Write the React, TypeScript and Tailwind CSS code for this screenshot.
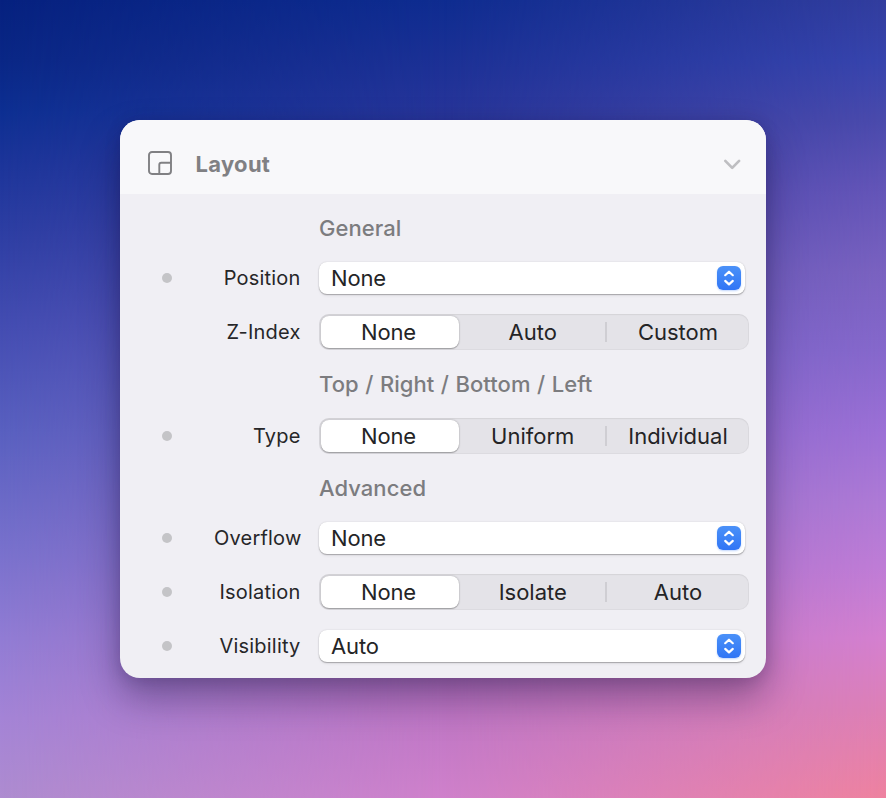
import { ReactNode } from "react";

function Dot({ show }: { show: boolean }) {
  return (
    <div className="flex w-[94px] shrink-0 justify-center">
      {show && <span className="h-2.5 w-2.5 rounded-full bg-[#c4c4c7]" />}
    </div>
  );
}

function Row({ label, dot = true, height, children }: { label: string; dot?: boolean; height: string; children: ReactNode }) {
  return (
    <div className={"flex items-center " + height}>
      <Dot show={dot} />
      <span className="w-[87px] shrink-0 pr-[0.5px] text-right text-[20px] leading-6 tracking-[0.2px] whitespace-nowrap text-[#262628]">{label}</span>
      {children}
    </div>
  );
}

function Heading({ text, height }: { text: string; height: string }) {
  return (
    <h3 className={"flex items-center pl-[199px] text-[22px] font-medium tracking-[0.05px] [word-spacing:0.6px] text-[#7c7c7f] " + height}>{text}</h3>
  );
}

function Select({ value }: { value: string }) {
  return (
    <button className="ml-[18px] flex h-8 w-[426px] items-center justify-between rounded-[8px] bg-white pr-1 pl-3 shadow-[0_1px_1px_rgba(0,0,0,0.24),0_0_1.5px_rgba(0,0,0,0.18),0_2px_3px_rgba(0,0,0,0.06)]">
      <span className="text-[22px] leading-7 tracking-[-0.15px] text-[#242426]">{value}</span>
      <span className="flex h-6 w-6 items-center justify-center rounded-[6px] bg-gradient-to-b from-[#4b91f8] to-[#3075f5] shadow-[0_1px_2px_rgba(48,117,245,0.3)]">
        <svg width="24" height="24" viewBox="0 0 24 24" fill="none" stroke="white" strokeWidth="2.2" strokeLinecap="round" strokeLinejoin="round">
          <path d="M8.2 9.2 12 5.7l3.8 3.5M8.2 14.9 12 18.4l3.8-3.5" />
        </svg>
      </span>
    </button>
  );
}

function Segmented({ items }: { items: [string, string, string] }) {
  return (
    <div className="ml-[18px] flex h-9 w-[430px] items-center rounded-[10px] bg-[#e4e3e8] pl-[2px] shadow-[inset_0_0_0_1px_rgba(0,0,0,0.03),inset_0_1px_2px_rgba(0,0,0,0.04)]">
      <button className="h-8 w-[138px] rounded-[8px] bg-white pr-[3px] text-[22px] leading-8 tracking-[-0.15px] text-[#242426] shadow-[0_1px_1px_rgba(0,0,0,0.24),0_0_2px_rgba(0,0,0,0.3)]">{items[0]}</button>
      <button className="h-8 w-[146px] pl-[1.5px] text-[22px] leading-8 text-[#242426]">{items[1]}</button>
      <span className="h-5 w-[2px] bg-[#cfced3]" />
      <button className="h-8 w-[142px] text-[22px] leading-8 text-[#242426]">{items[2]}</button>
    </div>
  );
}

export default function App() {
  return (
    <div className="relative flex h-[798px] w-[886px] justify-center overflow-hidden bg-[linear-gradient(180deg,#06217f_0%,#0a2786_7.5%,#0d2f92_14%,#1b3499_20%,#2f3fa4_30%,#444db2_41%,#5960c0_54%,#7670cc_68%,#917cd4_80%,#a484d6_90%,#ae8cd0_100%)] pt-[120px] font-['Inter',sans-serif]">
      <div className="absolute inset-0 bg-[linear-gradient(180deg,#0e2c90_0%,#233398_12%,#4041a5_26%,#6a5abb_45%,#9668c0_70%,#bd75c4_88%,#cf80cb_100%)] [mask-image:linear-gradient(90deg,transparent,black_50%)]" />
      <div className="absolute inset-0 bg-[linear-gradient(180deg,#323d9e_0%,#3744ad_7.5%,#4a4aac_15%,#6455b8_24%,#7a62c0_34%,#8668cc_44%,#9c70d6_54%,#ae7ad6_63%,#bf7cd6_71%,#d480cf_80%,#dd80b6_89%,#ee829f_100%)] [mask-image:linear-gradient(90deg,transparent_50%,black)]" />
      <main className="relative h-[558px] w-[646px] rounded-[20px] bg-[#f0eff4] shadow-[0_20px_38px_rgba(20,10,50,0.36),0_2px_16px_rgba(20,10,50,0.16)]">
        <header className="flex h-[74px] items-center rounded-t-[20px] bg-[#f8f8fa] pt-[14px] pr-[24px] pl-[28px]">
          <svg className="mb-0.5" width="24" height="24" viewBox="0 0 24 24" fill="none" stroke="#808083" strokeWidth="1.9">
            <rect x="1" y="1" width="22" height="22" rx="3" />
            <path d="M11.3 23v-9.2a2 2 0 0 1 2-2H23" />
          </svg>
          <h2 className="ml-[23.5px] flex-1 text-[22px] font-bold tracking-[0.3px] text-[#808083]">Layout</h2>
          <svg width="20" height="20" viewBox="0 0 20 20" fill="none" stroke="#bebec1" strokeWidth="2.7" strokeLinecap="round" strokeLinejoin="round">
            <path d="m3.3 6.9 6.9 7 6.9-7" />
          </svg>
        </header>
        <div className="pt-2">
          <Heading text="General" height="h-[52px]" />
          <Row label="Position" height="h-12"><Select value="None" /></Row>
          <Row label="Z-Index" dot={false} height="h-[60px]"><Segmented items={["None", "Auto", "Custom"]} /></Row>
          <Heading text="Top / Right / Bottom / Left" height="h-11" />
          <Row label="Type" height="h-[60px]"><Segmented items={["None", "Uniform", "Individual"]} /></Row>
          <Heading text="Advanced" height="h-11" />
          <Row label="Overflow" height="h-14"><Select value="None" /></Row>
          <Row label="Isolation" height="h-[52px]"><Segmented items={["None", "Isolate", "Auto"]} /></Row>
          <Row label="Visibility" height="h-14"><Select value="Auto" /></Row>
        </div>
      </main>
    </div>
  );
}
